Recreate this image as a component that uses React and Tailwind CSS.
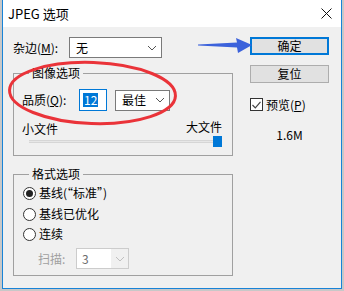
import React from "react";

const font = "font-['Noto_Sans_CJK_SC','Noto_Sans',sans-serif]";

function Chevron({ color = "#555" }) {
  return (
    <svg width="10" height="6" viewBox="0 0 10 6" className="shrink-0">
      <polyline points="1,1 5,5 9,1" fill="none" stroke={color} strokeWidth="1" />
    </svg>
  );
}

function Select({ value, width, disabled = false }) {
  if (disabled) {
    return (
      <div className={`flex h-[21px] ${width} items-center border border-[#cccccc] bg-[#f0f0f0]`}>
        <div className="flex h-full w-[34px] items-center bg-white pl-[5px] text-[#6d6d6d]">{value}</div>
        <div className="flex flex-1 items-center justify-center">
          <Chevron color="#bfbfbf" />
        </div>
      </div>
    );
  }
  return (
    <div className={`flex h-[21px] ${width} items-center justify-between border border-[#7a7a7a] bg-white pl-[6px] pr-[4px]`}>
      <span className="leading-none">{value}</span>
      <Chevron />
    </div>
  );
}

function GroupBox({ title, className, children }) {
  return (
    <div className={`relative border border-[#a0a0a0] ${className}`}>
      <span className="absolute -top-[9px] left-[15px] bg-[#f0f0f0] px-[3px] leading-[16px]">{title}</span>
      {children}
    </div>
  );
}

function Radio({ checked, label, className = "" }) {
  return (
    <div className={`flex h-[20px] items-center pl-[9px] ${className}`}>
      <span className="flex h-[13px] w-[13px] items-center justify-center rounded-full border border-[#333] bg-white">
        {checked && <span className="h-[7px] w-[7px] rounded-full bg-[#222]" />}
      </span>
      <span className="ml-[3px] leading-[16px]">{label}</span>
    </div>
  );
}

function Button({ children, focused = false, className = "" }) {
  return (
    <div
      className={`flex h-[18px] w-[79px] items-center justify-center bg-[#e1e1e1] leading-none ${
        focused ? "border-2 border-[#0078d7]" : "border border-[#adadad]"
      } ${className}`}
    >
      {children}
    </div>
  );
}

function Annotations() {
  return (
    <svg width="344" height="291" className="pointer-events-none absolute left-0 top-0">
      <ellipse
        cx="92.5"
        cy="93"
        rx="83"
        ry="30.5"
        transform="rotate(2 92.5 93)"
        fill="none"
        stroke="#ea3339"
        strokeWidth="3"
      />
      <polygon
        points="198,44.5 237,42.5 236,38 252,45 238,53 237,47.5 198,45.5"
        fill="#3c62db"
      />
    </svg>
  );
}

export default function App() {
  return (
    <div className={`relative h-[291px] w-[344px] overflow-hidden bg-[#c8c8c8] text-[12px] text-black ${font}`}>
      <div className="ml-[2px] flex h-[289px] w-[340px] flex-col border-x border-b border-[#1883d7] bg-[#f0f0f0]">
        <div className="flex h-[27px] items-center justify-between bg-white pl-[5px] pr-[9px]">
          <span className="text-[13px] leading-none">JPEG 选项</span>
          <svg width="11" height="11" viewBox="0 0 11 11">
            <path d="M0.5 0.5 L10.5 10.5 M10.5 0.5 L0.5 10.5" stroke="#111" strokeWidth="1" />
          </svg>
        </div>

        <div className="flex flex-1 pl-[10px] pt-[10px]">
          <div className="flex w-[220px] flex-col">
            <div className="flex h-[21px] items-center">
              <span className="w-[56px] leading-none">
                杂边(<span className="underline">M</span>):
              </span>
              <Select value="无" width="w-[93px]" />
            </div>

            <GroupBox title="图像选项" className="mt-[15px] h-[83px] pt-[15px]">
              <div className="flex h-[22px] items-center pl-[8px]">
                <span className="w-[57px] leading-none">
                  品质(<span className="underline">Q</span>):
                </span>
                <div className="flex h-[22px] w-[28px] items-center border border-[#0078d7] bg-white pl-[3px]">
                  <span className="bg-[#0078d7] px-[1px] leading-[14px] text-white">12</span>
                </div>
                <div className="ml-[8px]">
                  <Select value="最佳" width="w-[55px]" />
                </div>
              </div>
              <div className="mt-[9px] flex h-[16px] items-start justify-between pl-[8px] pr-[10px]">
                <span className="mt-[1px] leading-[16px]">小文件</span>
                <span className="-mt-[1px] leading-[16px]">大文件</span>
              </div>
              <div className="ml-[15px] mr-[10px] flex h-[11px] items-center">
                <div className="h-[3px] flex-1 border-y border-[#d6d6d6] bg-[#e7e7e7]" />
                <div className="h-[11px] w-[9px] bg-[#0078d7]" />
              </div>
            </GroupBox>

            <GroupBox title="格式选项" className="mt-[18px] h-[102px] pt-[8px]">
              <Radio checked label="基线(“标准”)" />
              <Radio label="基线已优化" className="mt-[1px]" />
              <Radio label="连续" />
              <div className="mt-[4px] flex h-[21px] items-center pl-[24px]">
                <span className="w-[38px] leading-none text-[#a0a0a0]">扫描:</span>
                <Select value="3" width="w-[53px]" disabled />
              </div>
            </GroupBox>
          </div>

          <div className="ml-[17px] flex w-[79px] flex-col">
            <Button focused>确定</Button>
            <Button className="mt-[10px]">复位</Button>
            <div className="mt-[15px] flex h-[13px] items-center">
              <span className="flex h-[13px] w-[13px] items-center justify-center border border-[#333] bg-white">
                <svg width="9" height="8" viewBox="0 0 9 8">
                  <polyline points="0.5,4 3.3,6.8 8.5,0.8" fill="none" stroke="#444" strokeWidth="1.2" />
                </svg>
              </span>
              <span className="ml-[3px] leading-none">
                预览(<span className="underline">P</span>)
              </span>
            </div>
            <div className="mt-[16px] text-center leading-[16px]">1.6M</div>
          </div>
        </div>
      </div>
      <Annotations />
    </div>
  );
}
